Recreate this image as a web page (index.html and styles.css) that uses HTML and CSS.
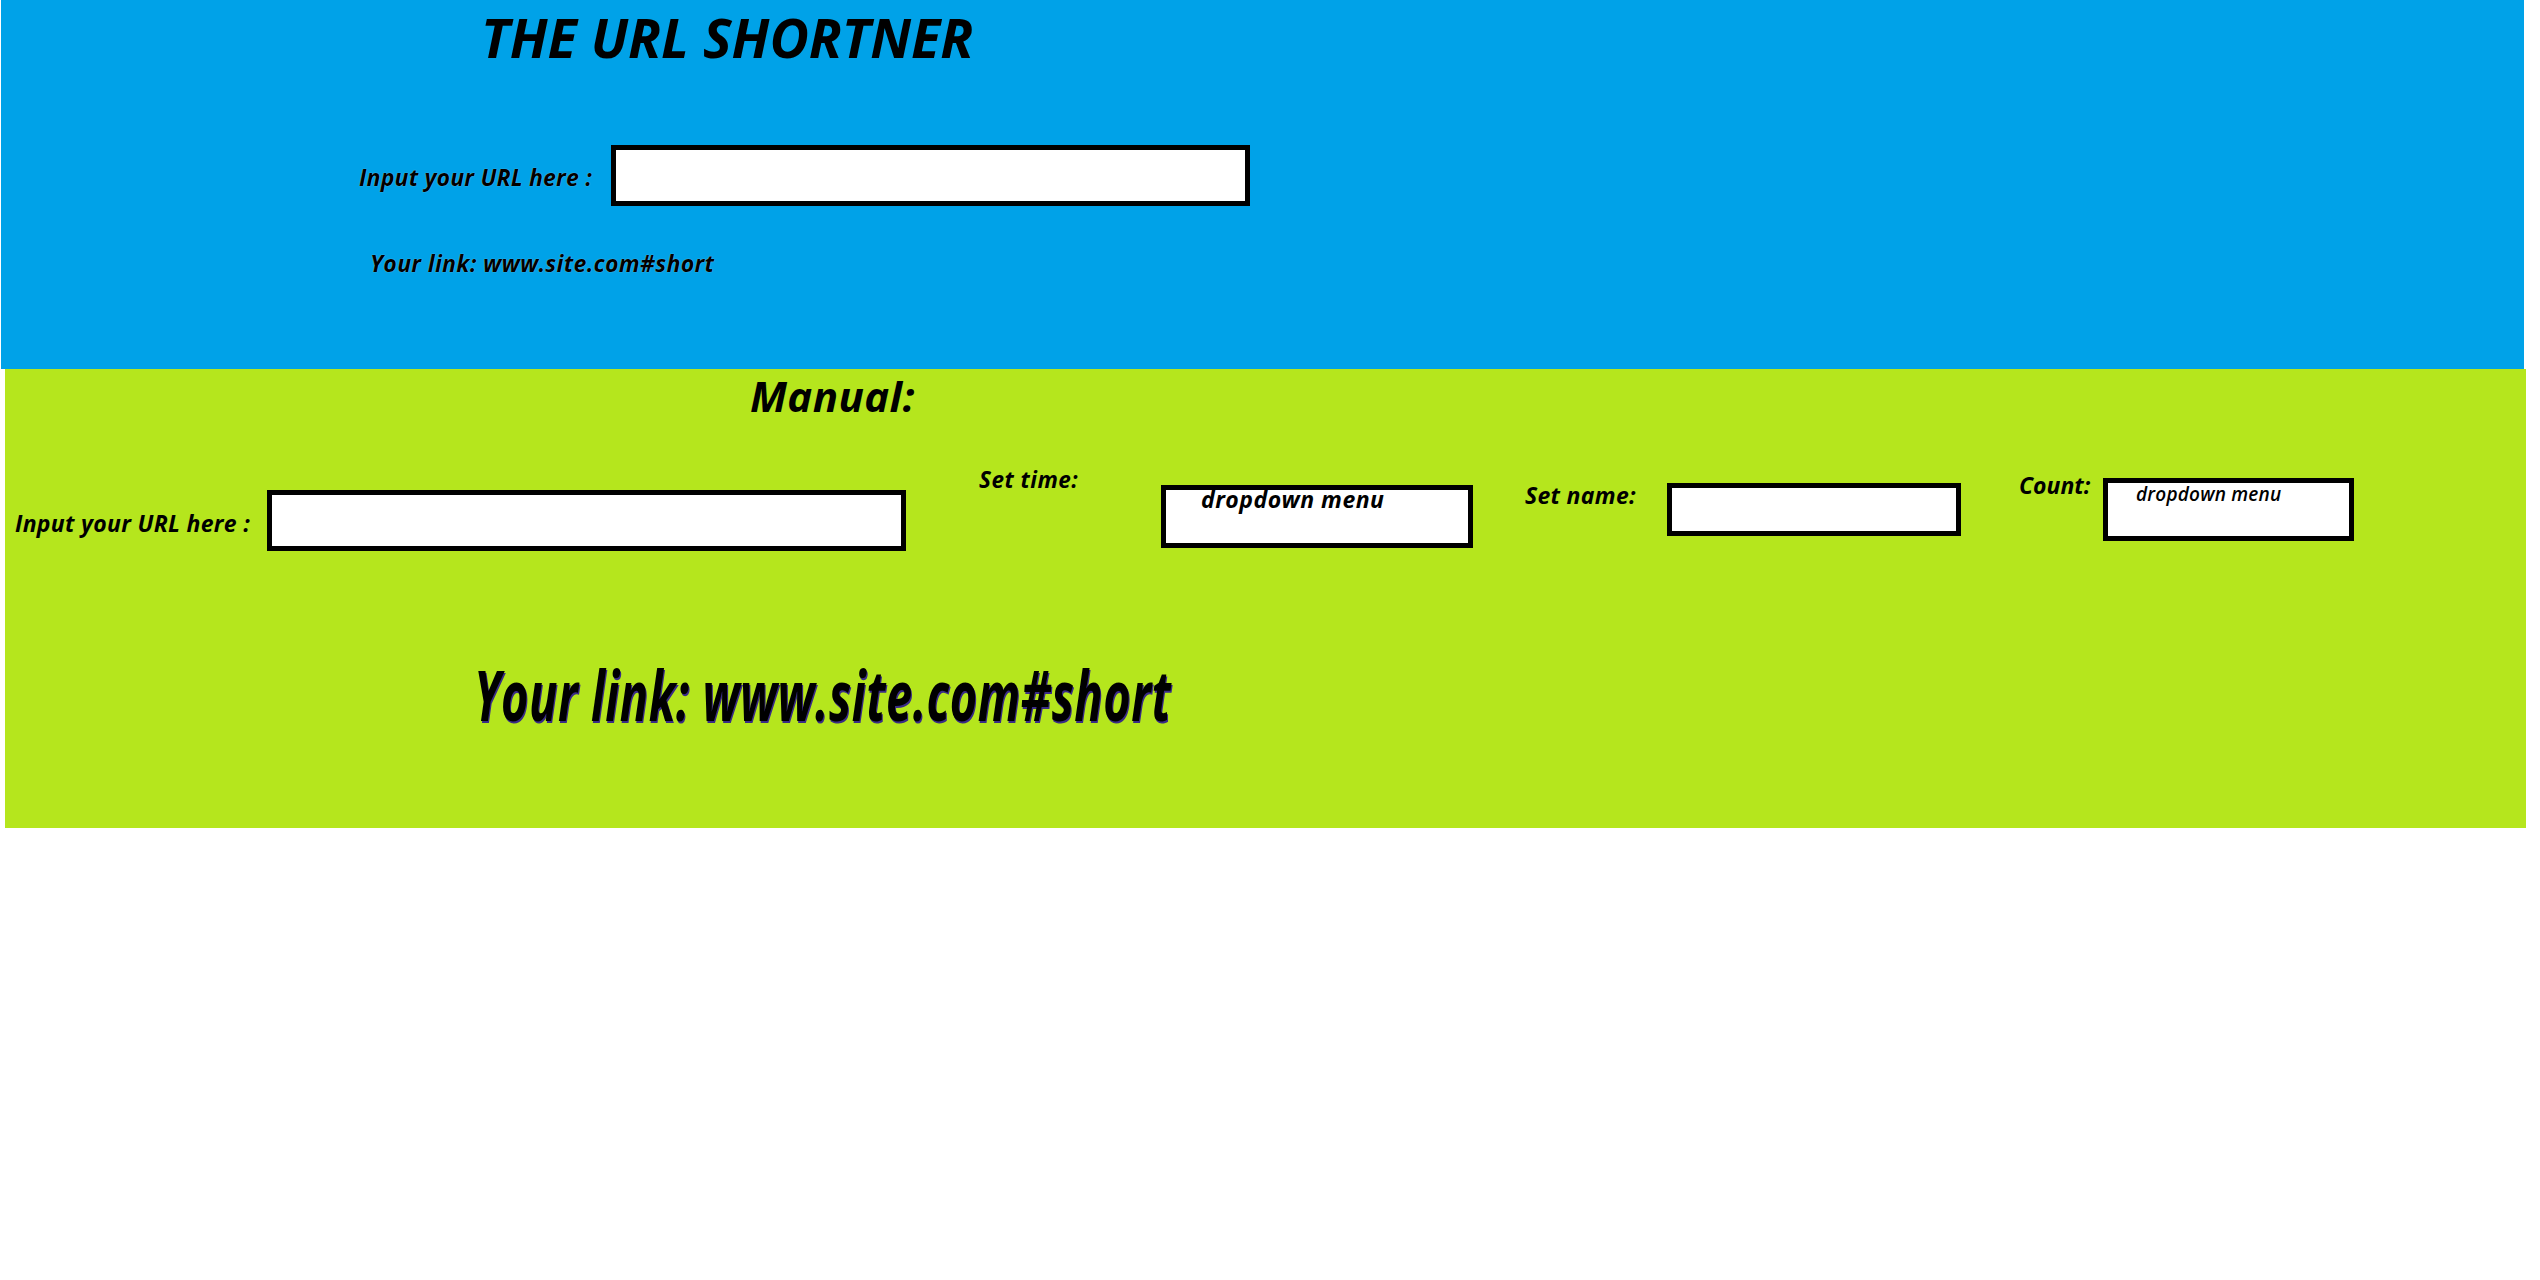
FILE: index.html
```html
<!DOCTYPE html>
<html lang="en">
<head>
<meta charset="utf-8">
<title>The URL Shortner</title>
<link rel="stylesheet" href="styles.css">
</head>
<body>
<header class="hero">
  <h1 class="title">THE URL SHORTNER</h1>
  <div class="hero-row">
    <label class="hero-label" for="url-auto">Input your URL here :</label>
    <input class="box box-wide" id="url-auto" type="text">
  </div>
  <p class="hero-link">Your link: www.site.com#short</p>
</header>
<section class="manual">
  <h2 class="manual-title">Manual:</h2>
  <div class="fields">
    <label class="lbl lbl-url" for="url-manual">Input your URL here :</label>
    <input class="box box-wide box-url" id="url-manual" type="text">
    <span class="lbl lbl-time">Set time:</span>
    <div class="box dd dd-time">dropdown menu</div>
    <label class="lbl lbl-name" for="name">Set name:</label>
    <input class="box box-name" id="name" type="text">
    <span class="lbl lbl-count">Count:</span>
    <div class="box dd dd-count">dropdown menu</div>
  </div>
  <p class="big-link">Your link: www.site.com#short</p>
</section>
</body>
</html>
```
FILE: styles.css
```css
html, body {
  margin: 0;
  padding: 0;
  background: #ffffff;
}
body {
  font-family: "Open Sans", "DejaVu Sans", sans-serif;
  font-weight: 700;
  font-style: italic;
  color: #000;
}
.hero {
  margin-left: 1px;
  width: 2523px;
  height: 369px;
  background: #00a2e8;
  padding-top: 10px;
  box-sizing: border-box;
}
.title {
  margin: 0;
  padding-left: 480px;
  font-size: 54px;
  line-height: 1;
  letter-spacing: 0;
  font-weight: 700;
}
.hero-row {
  display: flex;
  align-items: flex-start;
  margin-top: 81px;
  padding-left: 358px;
}
.hero-label {
  width: 252px;
  margin-top: 21px;
  font-size: 23px;
  line-height: 1;
  letter-spacing: 0.2px;
  text-shadow: 0 0 1px rgba(255,255,255,0.7);
}
.box {
  box-sizing: border-box;
  border: 5px solid #000;
  background: #fff;
  margin: 0;
  padding: 0;
  font: inherit;
  outline: none;
}
.box-wide {
  width: 639px;
  height: 61px;
}
.hero-link {
  margin: 46px 0 0;
  padding-left: 369px;
  font-size: 23px;
  line-height: 1;
  letter-spacing: 0.35px;
  text-shadow: 0 0 1px rgba(255,255,255,0.7);
}
.manual {
  margin-left: 5px;
  width: 2521px;
  height: 459px;
  background: #b5e61d;
  padding-top: 6px;
  box-sizing: border-box;
}
.manual-title {
  margin: 0;
  padding-left: 745px;
  font-size: 42px;
  line-height: 1;
  letter-spacing: 0.4px;
  font-weight: 700;
}
.fields {
  display: flex;
  align-items: flex-start;
  margin-top: 52px;
  padding-left: 10px;
}
.lbl {
  font-size: 23px;
  line-height: 1;
}
.lbl-url {
  width: 252px;
  margin-top: 43px;
  letter-spacing: 0.3px;
}
.box-url {
  margin-top: 21px;
}
.lbl-time {
  width: 182px;
  margin-left: 73px;
  margin-top: 0;
  font-size: 22.5px;
  letter-spacing: 0.5px;
}
.dd {
  font-size: 23px;
  line-height: 18px;
  letter-spacing: 0.5px;
  white-space: nowrap;
}
.dd-time {
  width: 312px;
  height: 63px;
  margin-top: 16px;
  padding-left: 35px;
}
.lbl-name {
  width: 142px;
  margin-left: 52px;
  margin-top: 15px;
  letter-spacing: 0.3px;
}
.box-name {
  width: 294px;
  height: 53px;
  margin-top: 14px;
}
.lbl-count {
  width: 84px;
  margin-left: 58px;
  margin-top: 5px;
}
.dd-count {
  width: 251px;
  height: 63px;
  margin-top: 9px;
  padding-left: 28px;
  font-size: 19px;
  line-height: 22px;
  font-weight: 600;
  letter-spacing: 0.2px;
}
.big-link {
  margin: 110px 0 0;
  padding-left: 469px;
  font-size: 47px;
  line-height: 1;
  letter-spacing: 0.5px;
  transform: scaleY(1.47);
  transform-origin: left top;
  text-shadow: 1px 1px 0 #3a2c86;
}
```
